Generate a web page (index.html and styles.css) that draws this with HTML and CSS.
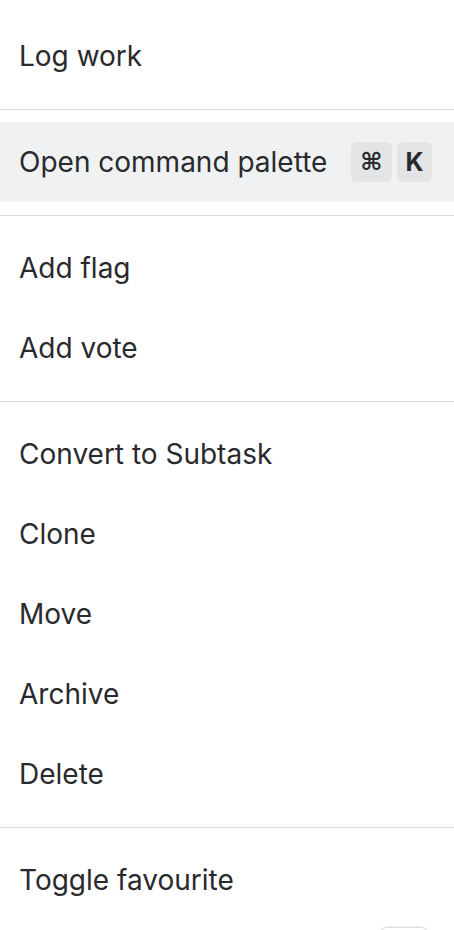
FILE: index.html
```html
<!DOCTYPE html>
<html lang="en">
<head>
<meta charset="utf-8">
<title>Menu</title>
<link rel="stylesheet" href="styles.css">
</head>
<body>
<div class="menu">
  <div class="group group-first">
    <div class="item">Log work</div>
  </div>
  <div class="group">
    <div class="item item-active">
      <span class="label">Open command palette</span>
      <span class="keys"><kbd class="key key-cmd">⌘</kbd><kbd class="key">K</kbd></span>
    </div>
  </div>
  <div class="group">
    <div class="item">Add flag</div>
    <div class="item">Add vote</div>
  </div>
  <div class="group">
    <div class="item">Convert to Subtask</div>
    <div class="item">Clone</div>
    <div class="item">Move</div>
    <div class="item">Archive</div>
    <div class="item">Delete</div>
  </div>
  <div class="group">
    <div class="item">Toggle favourite</div>
  </div>
</div>
<div class="peek"></div>
</body>
</html>
```

FILE: styles.css
```css
html, body {
  margin: 0;
  padding: 0;
  background: #ffffff;
  overflow: hidden;
  height: 930px;
}
body {
  font-family: Inter, "Noto Sans", sans-serif;
  color: #292a2e;
  position: relative;
}
.menu {
  padding-top: 4px;
}
.group {
  padding: 12px 0 13px;
  border-top: 1px solid #dcdddf;
}
.group-first {
  border-top: none;
}
.item {
  height: 80px;
  display: flex;
  align-items: center;
  justify-content: space-between;
  padding: 0 22px 0 19px;
  font-size: 28px;
  letter-spacing: 0;
}
.item-active {
  background: #f0f1f2;
}
.keys {
  display: flex;
  gap: 5px;
}
.key {
  font-family: Inter, "Noto Sans", sans-serif;
  height: 40px;
  min-width: 35px;
  padding: 0 3px;
  box-sizing: border-box;
  border-radius: 6px;
  background: #e3e4e6;
  display: flex;
  align-items: center;
  justify-content: center;
  font-size: 25px;
  font-weight: 700;
  color: #292a2e;
}
.key-cmd {
  min-width: 41px;
  font-family: "DejaVu Sans", sans-serif;
  font-weight: 700;
  font-size: 24px;
}
.peek {
  position: absolute;
  left: 378px;
  top: 928px;
  width: 52px;
  height: 20px;
  border-radius: 10px;
  background: #fff;
  box-shadow: 0 -1px 2px rgba(0,0,0,0.18);
}
```
